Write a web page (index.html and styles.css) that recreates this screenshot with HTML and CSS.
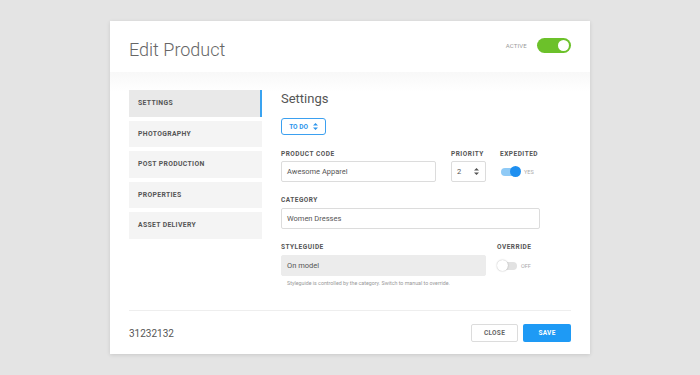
FILE: index.html
```html
<!DOCTYPE html>
<html>
<head>
<meta charset="utf-8">
<link rel="stylesheet" href="styles.css">
</head>
<body>
<div class="card">
  <div class="header">
    <div class="title">Edit Product</div>
    <div class="active">
      <span class="active-label">ACTIVE</span>
      <span class="switch-green"><span class="knob"></span></span>
    </div>
  </div>
  <div class="body">
    <div class="content">
      <div class="sidebar">
        <div class="nav-item selected">SETTINGS</div>
        <div class="nav-item">PHOTOGRAPHY</div>
        <div class="nav-item">POST PRODUCTION</div>
        <div class="nav-item">PROPERTIES</div>
        <div class="nav-item">ASSET DELIVERY</div>
      </div>
      <div class="main">
        <div class="heading">Settings</div>
        <div class="status">TO DO
          <svg class="arrows" width="5" height="7" viewBox="0 0 5 7"><path d="M2.5 0 L5 2.6 L0 2.6 Z M2.5 7 L5 4.4 L0 4.4 Z" fill="currentColor"/></svg>
        </div>
        <div class="row row1">
          <div class="field code">
            <div class="label">PRODUCT CODE</div>
            <div class="input">Awesome Apparel</div>
          </div>
          <div class="field priority">
            <div class="label">PRIORITY</div>
            <div class="input select">2
              <svg class="arrows dark" width="5" height="7" viewBox="0 0 5 7"><path d="M2.5 0 L5 2.6 L0 2.6 Z M2.5 7 L5 4.4 L0 4.4 Z" fill="currentColor"/></svg>
            </div>
          </div>
          <div class="field expedited">
            <div class="label">EXPEDITED</div>
            <div class="toggle-line">
              <span class="mini-switch on"><span class="mini-knob"></span></span>
              <span class="toggle-text">YES</span>
            </div>
          </div>
        </div>
        <div class="row row2">
          <div class="field category">
            <div class="label">CATEGORY</div>
            <div class="input">Women Dresses</div>
          </div>
        </div>
        <div class="row row3">
          <div class="field style">
            <div class="label">STYLEGUIDE</div>
            <div class="input disabled">On model</div>
          </div>
          <div class="field override">
            <div class="label">OVERRIDE</div>
            <div class="toggle-line">
              <span class="mini-switch off"><span class="mini-knob"></span></span>
              <span class="toggle-text">OFF</span>
            </div>
          </div>
        </div>
        <div class="help">Styleguide is controlled by the category. Switch to manual to override.</div>
      </div>
    </div>
    <div class="footer">
      <div class="code-num">31232132</div>
      <div class="buttons">
        <div class="btn close">CLOSE</div>
        <div class="btn save">SAVE</div>
      </div>
    </div>
  </div>
</div>
</body>
</html>
```
FILE: styles.css
```css
* { box-sizing: border-box; }
html, body { margin: 0; padding: 0; }
body {
  background: #e4e4e4;
  font-family: Roboto, "Liberation Sans", sans-serif;
  width: 700px;
  height: 375px;
  overflow: hidden;
  padding-top: 21px;
}
.card {
  width: 480px;
  height: 333px;
  margin: 0 auto;
  background: #fff;
  box-shadow: 0 1px 4px rgba(0,0,0,0.12);
  display: flex;
  flex-direction: column;
}
.header {
  height: 51px;
  padding: 0 19px 0 19px;
  display: flex;
  align-items: center;
  justify-content: space-between;
}
.title {
  font-size: 18px;
  font-weight: 300;
  color: #666;
  margin-top: 6px;
}
.active {
  display: flex;
  align-items: center;
  gap: 10px;
  margin-top: -2px;
}
.active-label {
  font-size: 6px;
  color: #9a9a9a;
  letter-spacing: 0.2px;
}
.switch-green {
  width: 34px;
  height: 15px;
  border-radius: 8px;
  background: #6cc12a;
  display: flex;
  align-items: center;
  justify-content: flex-end;
  padding: 0 2px;
}
.knob {
  width: 11px;
  height: 11px;
  border-radius: 50%;
  background: #fff;
}
.body {
  flex: 1;
  padding: 18px 19px 0 19px;
  background: linear-gradient(#f8f8f8, #fff 20px);
  display: flex;
  flex-direction: column;
}
.content {
  display: flex;
  gap: 19px;
  height: 220px;
}
.sidebar {
  width: 133px;
  display: flex;
  flex-direction: column;
  gap: 4px;
}
.nav-item {
  height: 26.5px;
  background: #f4f4f4;
  font-size: 6.8px;
  font-weight: 700;
  color: #555;
  letter-spacing: 0.35px;
  display: flex;
  align-items: center;
  padding-left: 9px;
}
.nav-item.selected {
  background: #e9e9e9;
  border-right: 2px solid #3aa3f0;
}
.main {
  flex: 1;
  display: flex;
  flex-direction: column;
}
.heading {
  font-size: 13px;
  line-height: 16px;
  color: #555;
  margin-top: 1px;
}
.status {
  margin-top: 11px;
  width: 45px;
  height: 17px;
  border: 1.5px solid #3ba0f0;
  border-radius: 3px;
  color: #2d95ec;
  font-size: 6.5px;
  font-weight: 700;
  display: flex;
  align-items: center;
  justify-content: center;
  gap: 5px;
}
.arrows { display: block; }
.arrows.dark { color: #555; }
.row {
  display: flex;
}
.row1 { margin-top: 15px; gap: 15px; }
.row2 { margin-top: 14px; }
.row3 { margin-top: 14px; gap: 11px; }
.field {
  display: flex;
  flex-direction: column;
  gap: 4px;
}
.label {
  font-size: 6.5px;
  line-height: 8px;
  font-weight: 700;
  color: #555;
  letter-spacing: 0.5px;
}
.input {
  height: 21px;
  border: 1px solid #dcdcdc;
  border-radius: 2px;
  font-size: 7.5px;
  color: #555;
  display: flex;
  align-items: center;
  padding-left: 5px;
  background: #fff;
}
.row1 .field { gap: 3px; }
.code { width: 155px; }
.priority { width: 35px; }
.select { justify-content: space-between; padding-right: 6px; }
.expedited { margin-left: -1px; }
.category { width: 259px; }
.style { width: 205px; }
.input.disabled {
  background: #ececec;
  border-color: #ececec;
}
.toggle-line {
  height: 21px;
  display: flex;
  align-items: center;
  gap: 4px;
  padding-left: 1px;
}
.mini-switch {
  width: 19px;
  height: 8px;
  border-radius: 4px;
  display: flex;
  align-items: center;
}
.mini-switch.on { background: #8fcaf6; justify-content: flex-end; }
.mini-switch.off { background: #e2e2e2; justify-content: flex-start; }
.mini-knob {
  width: 11px;
  height: 11px;
  border-radius: 50%;
  flex: none;
}
.on .mini-knob { background: #1e8ff0; margin-right: -1px; }
.off .mini-knob { background: #fff; box-shadow: 0 0 1.5px rgba(0,0,0,0.35); margin-left: -1px; }
.toggle-text {
  font-size: 5.5px;
  color: #aaa;
}
.help {
  margin-top: 4px;
  padding-left: 6px;
  font-size: 5.3px;
  color: #999;
}
.footer {
  border-top: 1px solid #eeeeee;
  display: flex;
  justify-content: space-between;
  align-items: center;
  height: 44px;
  padding-top: 1px;
}
.code-num {
  font-size: 10px;
  color: #555;
}
.buttons {
  display: flex;
  gap: 5px;
}
.btn {
  height: 18px;
  width: 47px;
  border-radius: 2px;
  font-size: 6.5px;
  font-weight: 700;
  display: flex;
  align-items: center;
  justify-content: center;
  letter-spacing: 0.3px;
}
.close {
  border: 1px solid #dcdcdc;
  color: #666;
  background: #fff;
}
.save {
  width: 48px;
  background: #1e9af5;
  color: #fff;
}
```
